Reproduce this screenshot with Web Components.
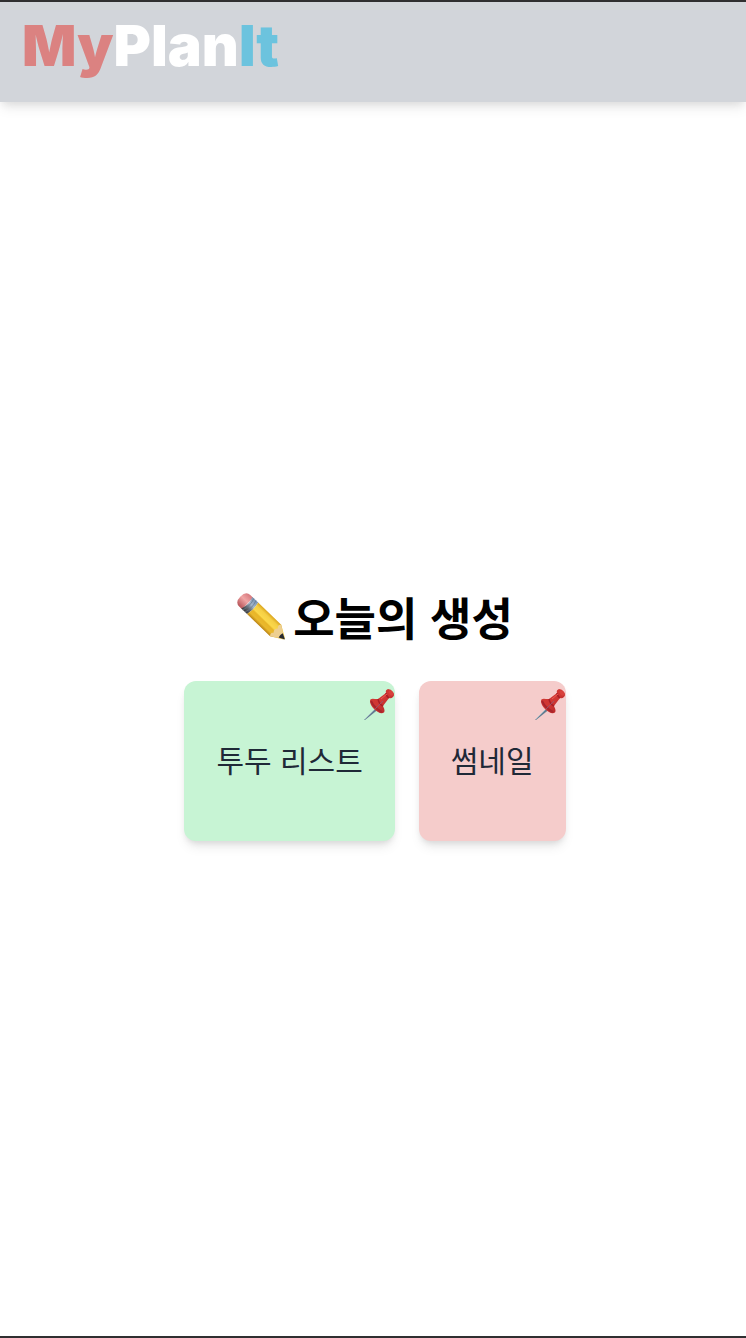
<!DOCTYPE html>
<html lang="ko">
<head>
<meta charset="utf-8">
<meta name="viewport" content="width=device-width, initial-scale=1">
<title>MyPlanIt</title>
<style>
  body { margin: 0; background: #fff; font-family: "Liberation Sans", "Noto Sans CJK KR", sans-serif; }
</style>
</head>
<body>
<plan-app>
  <plan-header></plan-header>
  <plan-board>
    <span slot="title">오늘의 생성</span>
    <plan-card tone="green">투두 리스트</plan-card>
    <plan-card tone="red">썸네일</plan-card>
  </plan-board>
</plan-app>
<script>
const define = (name, html) => {
  const template = document.createElement('template');
  template.innerHTML = html;
  customElements.define(name, class extends HTMLElement {
    constructor() {
      super();
      this.attachShadow({ mode: 'open' }).append(template.content.cloneNode(true));
    }
  });
};

define('plan-app', `
<style>
  :host { display: flex; flex-direction: column; box-sizing: border-box; min-height: 100vh;
    border-top: 2px solid #302f31; border-bottom: 2px solid #302f31; }
</style>
<slot></slot>`);

define('plan-header', `
<style>
  :host { display: block; }
  header { box-sizing: border-box; height: 100px; padding: 12px 22px; background: #d2d5da;
    box-shadow: 0 8px 12px -2px rgba(0,0,0,.08), 0 4px 8px -2px rgba(0,0,0,.08); }
  a { display: inline-block; font: 900 57px/64px Inter, sans-serif; color: #fff; text-decoration: none; }
  .my { color: #db8281; }
  .it { color: #6cc3de; }
</style>
<header><a href="#"><span class="my">My</span>Plan<span class="it">It</span></a></header>`);

define('plan-board', `
<style>
  :host { flex: 1; display: flex; }
  main { flex: 1; display: flex; flex-direction: column; align-items: center; justify-content: center; gap: 40px; padding: 0 0 4px 4px; }
  h1 { margin: 0; display: flex; align-items: center; gap: 8px; font-family: "Noto Sans CJK KR", sans-serif; font-size: 45px; line-height: 48px; font-weight: 700; color: #000; }
  svg { width: 48px; height: 48px; }
  .cards { display: flex; flex-wrap: wrap; justify-content: center; gap: 24px; }
</style>
<main>
  <h1>
    <svg viewBox="0 0 48 48" aria-hidden="true">
      <defs>
        <linearGradient id="wood" x1="0" y1="0" x2="0" y2="1">
          <stop offset="0" stop-color="#dba51d"/><stop offset=".2" stop-color="#f5cf45"/>
          <stop offset=".48" stop-color="#fbd84a"/><stop offset=".58" stop-color="#e8b528"/>
          <stop offset=".8" stop-color="#eab92d"/><stop offset="1" stop-color="#b98213"/>
        </linearGradient>
        <linearGradient id="metal" x1="0" y1="0" x2="0" y2="1">
          <stop offset="0" stop-color="#7893b5"/><stop offset=".4" stop-color="#a4b7cb"/>
          <stop offset=".7" stop-color="#62676e"/><stop offset="1" stop-color="#38383b"/>
        </linearGradient>
        <linearGradient id="rubber" x1="0" y1="0" x2="0" y2="1">
          <stop offset="0" stop-color="#d6787d"/><stop offset=".45" stop-color="#f0a5a5"/>
          <stop offset="1" stop-color="#b65358"/>
        </linearGradient>
      </defs>
      <g transform="translate(7 7) rotate(44)">
        <path d="M5-8H1Q-5-8-5 0T1 8H5Z" fill="url(#rubber)"/>
        <path d="M4-8H12Q14 0 12 8H4Q7 0 4-8Z" fill="url(#metal)"/>
        <path d="M6-8Q9 0 6 8M9-8Q12 0 9 8" fill="none" stroke="#687789" stroke-width=".7"/>
        <path d="M12-8H44L56-1V1L44 8H12Q14 0 12-8Z" fill="url(#wood)"/>
        <path d="M44-8L56 0L44 8Q41 5 44 3Q41 0 44-3Q41-6 44-8Z" fill="#edcf91"/>
        <path d="M51-3L57 0L51 3Q50 0 51-3Z" fill="#282a30"/>
      </g>
    </svg>
    <slot name="title"></slot>
  </h1>
  <div class="cards"><slot></slot></div>
</main>`);

define('plan-card', `
<style>
  :host { display: block; --tone: #c7f4d4; }
  :host([tone="red"]) { --tone: #f5cccb; }
  button { position: relative; display: block; box-sizing: border-box; height: 160px; margin: 0; padding: 2px 32px 0; border: 0; border-radius: 12px;
    background: var(--tone); color: #1f2937; font-family: inherit; font-size: 30px; line-height: 40px; cursor: pointer;
    box-shadow: 0 8px 12px -2px rgba(0,0,0,.08), 0 4px 6px -2px rgba(0,0,0,.1); }
  svg { position: absolute; top: 8px; right: 0; width: 32px; height: 32px; }
</style>
<button type="button"><slot></slot>
  <svg viewBox="0 0 32 32" aria-hidden="true">
    <defs>
      <linearGradient id="pin" x1="0" y1="0" x2="1" y2="1">
        <stop offset="0" stop-color="#cf3935"/><stop offset=".5" stop-color="#d03733"/><stop offset="1" stop-color="#a91f25"/>
      </linearGradient>
    </defs>
    <path d="M15 17L17 19L2 31L1 31Z" fill="#637d91"/>
    <path d="M15 17L2 30" stroke="#a5bdc8" stroke-width=".8"/>
    <path d="M7 12Q7 9 12 10L15 10L23 4Q22 1 25 0Q28 0 30 3Q32 6 30 8Q28 10 26 9L20 17Q23 23 20 24Q16 25 11 20Q7 16 7 12Z" fill="url(#pin)"/>
    <path d="M8 12Q11 19 19 23" fill="none" stroke="#a9252c" stroke-width="2"/>
    <path d="M15 10Q16 15 20 17M23 4Q23 7 26 9" fill="none" stroke="#a91e26" stroke-width="1.4"/>
    <path d="M18 10L24 5" stroke="#e85e56" stroke-width="1"/>
    <path d="M12 20L20 12" stroke="#9a5368" stroke-width="1"/>
    <ellipse cx="28" cy="4" rx="2" ry="3" transform="rotate(-38 28 4)" fill="#d8413c"/>
  </svg>
</button>`);
</script>
</body>
</html>
